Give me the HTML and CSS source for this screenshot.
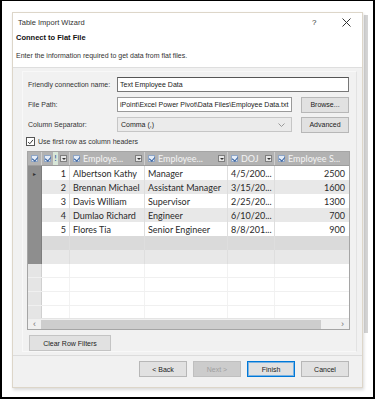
FILE: index.html
```html
<!DOCTYPE html>
<html>
<head>
<meta charset="utf-8">
<link rel="stylesheet" href="styles.css">
</head>
<body>
<div class="screen">
  <div class="bgbar"></div>
  <div class="dialog">
    <div class="titlebar">
      <span class="title">Table Import Wizard</span>
      <span class="help">?</span>
      <span class="close">
        <svg width="9" height="9" viewBox="0 0 9 9"><path d="M0.5 0.5 L8.5 8.5 M8.5 0.5 L0.5 8.5" stroke="#333" stroke-width="1" fill="none"/></svg>
      </span>
    </div>
    <div class="head">
      <div class="h1">Connect to Flat File</div>
      <div class="desc">Enter the information required to get data from flat files.</div>
    </div>
    <div class="body">
      <div class="panel">
        <div class="frow">
          <span class="lbl">Friendly connection name:</span>
          <div class="tbox wide">Text Employee Data</div>
        </div>
        <div class="frow">
          <span class="lbl">File Path:</span>
          <div class="tbox">iPoint\Excel Power Pivot\Data Files\Employee Data.txt</div>
          <div class="btn side">Browse...</div>
        </div>
        <div class="frow">
          <span class="lbl">Column Separator:</span>
          <div class="tbox combo"><span>Comma (,)</span>
            <svg width="7" height="4" viewBox="0 0 7 4"><path d="M0.5 0.5 L3.5 3.5 L6.5 0.5" stroke="#999" fill="none"/></svg>
          </div>
          <div class="btn side">Advanced</div>
        </div>
        <div class="chkrow">
          <span class="chk">
            <svg width="8" height="8" viewBox="0 0 8 8"><path d="M1.3 4 L3.2 6 L6.8 1.6" stroke="#333" stroke-width="1.1" fill="none"/></svg>
          </span>
          <span>Use first row as column headers</span>
        </div>

        <div class="grid">
          <div class="row hdr">
            <div class="c sel"><span class="hck"></span></div>
            <div class="c num"><span class="hck"></span><span class="bang">!</span><span class="dd"></span></div>
            <div class="c"><span class="hck"></span><span class="ht">Employe...</span><span class="dd"></span></div>
            <div class="c"><span class="hck"></span><span class="ht">Employee...</span><span class="dd"></span></div>
            <div class="c"><span class="hck"></span><span class="ht">DOJ</span><span class="dd"></span></div>
            <div class="c last"><span class="hck"></span><span class="ht">Employee S...</span></div>
          </div>
          <div class="row">
            <div class="c sel"><span class="cur">&#9656;</span></div><div class="c num">1</div><div class="c">Albertson Kathy</div><div class="c">Manager</div><div class="c">4/5/200...</div><div class="c r">2500</div>
          </div>
          <div class="row alt">
            <div class="c sel"></div><div class="c num">2</div><div class="c">Brennan Michael</div><div class="c">Assistant Manager</div><div class="c">3/15/20...</div><div class="c r">1600</div>
          </div>
          <div class="row">
            <div class="c sel"></div><div class="c num">3</div><div class="c">Davis William</div><div class="c">Supervisor</div><div class="c">2/25/20...</div><div class="c r">1300</div>
          </div>
          <div class="row alt">
            <div class="c sel"></div><div class="c num">4</div><div class="c">Dumlao Richard</div><div class="c">Engineer</div><div class="c">6/10/20...</div><div class="c r">700</div>
          </div>
          <div class="row">
            <div class="c sel"></div><div class="c num">5</div><div class="c">Flores Tia</div><div class="c">Senior Engineer</div><div class="c">8/8/201...</div><div class="c r">900</div>
          </div>
          <div class="row dark">
            <div class="c sel"></div><div class="c num"></div><div class="c"></div><div class="c"></div><div class="c"></div><div class="c"></div>
          </div>
          <div class="row alt">
            <div class="c sel"></div><div class="c num"></div><div class="c"></div><div class="c"></div><div class="c"></div><div class="c"></div>
          </div>
          <div class="empty">
            <div class="row blank"><div class="c sel"></div><div class="c num"></div><div class="c"></div><div class="c"></div><div class="c"></div><div class="c"></div></div>
            <div class="row blank"><div class="c sel"></div><div class="c num"></div><div class="c"></div><div class="c"></div><div class="c"></div><div class="c"></div></div>
            <div class="row blank"><div class="c sel"></div><div class="c num"></div><div class="c"></div><div class="c"></div><div class="c"></div><div class="c"></div></div>
            <div class="row blank"><div class="c sel"></div><div class="c num"></div><div class="c"></div><div class="c"></div><div class="c"></div><div class="c"></div></div>
          </div>
          <div class="hscroll">
            <span class="arr">&lsaquo;</span>
            <span class="thumb"></span>
            <span class="arr">&rsaquo;</span>
          </div>
        </div>

        <div class="btn clear">Clear Row Filters</div>
      </div>
    </div>
    <div class="footer">
      <div class="btn">&lt; Back</div>
      <div class="btn disabled">Next &gt;</div>
      <div class="btn primary">Finish</div>
      <div class="btn">Cancel</div>
    </div>
  </div>
</div>
</body>
</html>
```

FILE: styles.css
```css
* { box-sizing: border-box; }
html, body { margin: 0; padding: 0; background: #fff; }
body { font-family: "Liberation Sans", Arial, sans-serif; font-size: 7.5px; color: #222; }

.screen {
  position: relative;
  width: 375px; height: 399px;
  border: 1px solid #000;
  border-width: 1px 2px 2px 2px;
  padding: 11px 0 0 10px;
  background: #fff;
}
.bgbar {
  position: absolute; left: 362px; top: 14px; width: 4px; height: 318px;
  background: #d4d4d4;
}
.dialog {
  position: relative;
  width: 351px; height: 376px;
  border: 1px solid #ddd6c9;
  background: #f1f1f1;
  display: flex; flex-direction: column;
  box-shadow: 1px 2px 3px rgba(0,0,0,0.15);
}
.titlebar {
  height: 17px; background: #fff;
  display: flex; align-items: center;
  padding-left: 5px;
  color: #333;
}
.title { flex: 1; font-size: 7.5px; padding-top: 2px; }
.help { width: 30px; text-align: left; font-size: 8px; padding-top: 1px; }
.close { width: 20px; display: flex; align-items: center; padding-top: 1px; }
.head {
  background: #fff;
  padding: 2px 4px 0 3px;
  height: 38px;
  border-bottom: 1px solid #dedede;
}
.h1 { font-weight: bold; font-size: 7.5px; color: #111; height: 12px; line-height: 12px; }
.desc { margin-top: 7px; font-size: 7px; color: #333; line-height: 10px; }

.body { flex: 1; padding: 3px 5px 3px 9px; border-bottom: 1px solid #dcdcdc; }
.panel {
  height: 100%;
  border: 1px solid #f8f8f8;
  border-right-color: #e2e2e2;
  padding: 5px 7px 0 3px;
}
.frow { display: flex; align-items: center; height: 15px; margin-bottom: 5px; }
.lbl { width: 91px; padding-left: 2px; color: #333; font-size: 7px; }
.tbox {
  height: 15px; width: 175px;
  background: #fff; border: 1px solid #9a9a9a;
  font-size: 7px; line-height: 13px; padding-left: 2px;
  white-space: nowrap; overflow: hidden; color: #222;
}
.tbox.wide { width: 232px; border-color: #777; border-top-color: #555; }
.tbox.combo {
  background: #ebebeb; border-color: #c6c6c6;
  display: flex; justify-content: space-between; align-items: center;
  padding: 0 6px 0 3px;
}
.btn {
  background: #e1e1e1; border: 1px solid #b7b7b7;
  height: 16px; font-size: 7px; color: #222;
  display: flex; align-items: center; justify-content: center;
}
.btn.side { width: 48px; margin-left: 9px; }
.chkrow { display: flex; align-items: center; height: 11px; margin-top: -1px; gap: 3px; padding-left: 0; color: #333; font-size: 7px; }
.chk {
  width: 9px; height: 9px; border: 1px solid #555; background: #fff;
  display: flex; align-items: center; justify-content: center;
}

.grid {
  margin-top: 4px;
  margin-left: 1px;
  width: 323px;
  border: 1px solid #a5a5a5;
  background: #fff;
  font-family: Lato, "Open Sans", sans-serif;
  font-size: 9px; color: #2a2a2a;
}
.row {
  display: grid;
  grid-template-columns: 14px 28px 75px 83px 47px 1fr;
  height: 14px;
  background: #fff;
}
.row.alt { background: #e8e8e8; }
.row.dark { background: #dadada; }
.c {
  border-right: 1px solid #dedede;
  padding: 0 3px;
  display: flex; align-items: center;
  white-space: nowrap; overflow: hidden;
  line-height: 13px;
}
.c.last, .row .c:last-child { border-right: none; }
.c.sel { background: #8e8e8e; border-right: 1px solid #7d7d7d; padding: 0; justify-content: center; }
.cur { font-size: 6px; color: #333; }
.c.num { justify-content: flex-end; padding-right: 3px; }
.c.r { justify-content: flex-end; padding-right: 4px; }

.row.hdr { height: 14px; background: #b2b2b2; margin-top: 0; border-bottom: 1px solid #9d9d9d; }
.hdr .c { border-right: 1px solid #cfcfcf; padding: 0 2px 0 3px; color: #f4f4f4; gap: 3px; }
.hdr .c.sel { background: #b2b2b2; border-right: 1px solid #cfcfcf; justify-content: flex-start; padding-left: 3px; }
.hdr .c.num { justify-content: flex-start; padding-left: 2px; gap: 2px; }
.hck {
  width: 7px; height: 7px; flex: none;
  background: #e4ecf7; border: 1px solid #8fa6c6;
  position: relative;
}
.hck::after {
  content: ""; position: absolute; left: 1px; top: 0px;
  width: 3px; height: 4px;
  border: solid #3560a0; border-width: 0 1px 1px 0;
  transform: rotate(40deg);
}
.bang { color: #3560a0; font-size: 7px; font-weight: bold; width: 5px; text-align: center; background: #d8e6d8; }
.ht { flex: 1; overflow: hidden; font-size: 9px; }
.dd {
  width: 7px; height: 7px; flex: none;
  background: #e6e6e6; border: 1px solid #7f7f7f; position: relative;
}
.dd::after {
  content: ""; position: absolute; left: 1px; top: 2px;
  border-left: 2px solid transparent; border-right: 2px solid transparent;
  border-top: 2px solid #333;
}

.empty { height: 54px; overflow: hidden; }
.row.blank { height: 14px; border-bottom: 1px solid #f0f0f0; }
.row.blank .c { border-right-color: #f2f2f2; }
.row.blank .c.sel { background: #e5e5e5; border-right-color: #d0d0d0; }

.hscroll {
  height: 11px; background: #f0f0f0;
  display: flex; align-items: center;
  border-top: 1px solid #e4e4e4;
}
.arr { width: 13px; text-align: center; font-size: 9px; color: #777; line-height: 9px; font-family: "Liberation Sans", sans-serif; }
.thumb { flex: 1; height: 9px; background: #cdcdcd; margin-right: 15px; }

.btn.clear { width: 82px; margin-top: 5px; margin-left: 3px; height: 16px; background: #e1e1e1; border-color: #c4c4c4; }

.footer {
  height: 31px;
  display: flex; justify-content: flex-end; align-items: flex-start;
  padding: 5px 13px 0 0; gap: 6px;
}
.footer .btn { width: 48px; height: 16px; }
.footer .btn.disabled { background: #cccccc; border-color: #bfbfbf; color: #a0a0a0; }
.footer .btn.primary { border: 1px solid #0078d7; box-shadow: inset 0 0 0 1px #7ab3e3; }
```
